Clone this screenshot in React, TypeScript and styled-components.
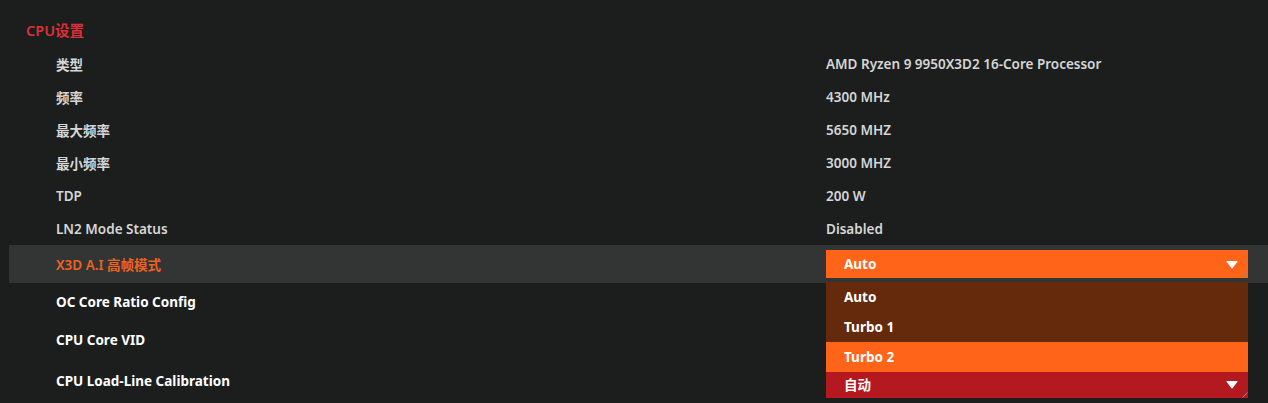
import React from "react";
import styled, { createGlobalStyle } from "styled-components";

const GlobalStyle = createGlobalStyle`
  html, body {
    margin: 0;
    padding: 0;
    background: #1c1e1e;
  }
  body {
    font-family: "Noto Sans", "Noto Sans CJK SC", sans-serif;
    font-weight: 600;
  }
`;

const Page = styled.div`
  width: 1268px;
  height: 403px;
  overflow: hidden;
  padding-top: 20px;
  box-sizing: border-box;
  background: #1c1e1e;
`;

const Title = styled.div`
  margin-left: 26px;
  height: 20px;
  line-height: 20px;
  font-size: 14.5px;
  color: #dc2f37;
  margin-bottom: 7px;
`;

const Row = styled.div<{ $h: number; $active?: boolean; $strong?: boolean }>`
  position: relative;
  display: grid;
  grid-template-columns: ${(p) => (p.$active ? "817px" : "826px")} 422px;
  align-items: center;
  height: ${(p) => p.$h}px;
  margin-left: ${(p) => (p.$active ? "9px" : "0")};
  background: ${(p) => (p.$active ? "#333535" : "transparent")};
  font-size: 13.5px;
  color: ${(p) => (p.$strong ? "#ffffff" : "#d6d6d6")};
  font-weight: ${(p) => (p.$strong ? 700 : 600)};
`;

const Label = styled.div<{ $active?: boolean }>`
  padding-left: ${(p) => (p.$active ? "47px" : "56px")};
  color: ${(p) => (p.$active ? "#f0621f" : "inherit")};
`;

const Value = styled.div`
  position: relative;
`;

const Select = styled.div<{ $tone: "orange" | "red"; $shift?: number }>`
  position: relative;
  display: flex;
  align-items: center;
  justify-content: space-between;
  height: 28px;
  margin-top: ${(p) => p.$shift ?? 0}px;
  padding: 0 10px 0 18px;
  background: ${(p) => (p.$tone === "orange" ? "#ff6418" : "#b4191f")};
  color: #ffffff;
  font-weight: 700;
`;

const Corner = styled.svg`
  position: absolute;
  right: 0;
  bottom: 0;
`;

const Menu = styled.div`
  position: absolute;
  top: 32px;
  left: 0;
  right: 0;
  z-index: 5;
  background: #652a0c;
`;

const Option = styled.div<{ $selected?: boolean }>`
  height: 30px;
  display: flex;
  align-items: center;
  padding-left: 18px;
  background: ${(p) => (p.$selected ? "#ff6418" : "transparent")};
  color: #ffffff;
  font-weight: 700;
`;

const Arrow = () => (
  <svg width="12" height="9" viewBox="0 0 12 9">
    <path d="M1 1.5 H11 L6 8 Z" fill="#ffffff" stroke="#ffffff" strokeWidth="1.2" strokeLinejoin="round" />
  </svg>
);

const CornerMark = () => (
  <Corner width="6" height="6" viewBox="0 0 6 6">
    <path d="M0.5 5.5 L5.5 0.5" stroke="#8a8a8a" strokeWidth="1" />
  </Corner>
);

const info = [
  ["类型", "AMD Ryzen 9 9950X3D2 16-Core Processor"],
  ["频率", "4300 MHz"],
  ["最大频率", "5650 MHZ"],
  ["最小频率", "3000 MHZ"],
  ["TDP", "200 W"],
  ["LN2 Mode Status", "Disabled"],
];

const options = ["Auto", "Turbo 1", "Turbo 2"];

export default function App() {
  return (
    <Page>
      <GlobalStyle />
      <Title>CPU设置</Title>
      {info.map(([label, value]) => (
        <Row key={label} $h={33}>
          <Label>{label}</Label>
          <Value>{value}</Value>
        </Row>
      ))}
      <Row $h={38} $active>
        <Label $active>X3D A.I 高帧模式</Label>
        <Value>
          <Select $tone="orange">
            <span>Auto</span>
            <Arrow />
            <CornerMark />
          </Select>
          <Menu>
            {options.map((o) => (
              <Option key={o} $selected={o === "Turbo 2"}>
                {o}
              </Option>
            ))}
          </Menu>
        </Value>
      </Row>
      <Row $h={38} $strong>
        <Label>OC Core Ratio Config</Label>
        <Value />
      </Row>
      <Row $h={38} $strong>
        <Label>CPU Core VID</Label>
        <Value />
      </Row>
      <Row $h={44} $strong>
        <Label>CPU Load-Line Calibration</Label>
        <Value>
          <Select $tone="red" $shift={6}>
            <span>自动</span>
            <Arrow />
            <CornerMark />
          </Select>
        </Value>
      </Row>
    </Page>
  );
}
